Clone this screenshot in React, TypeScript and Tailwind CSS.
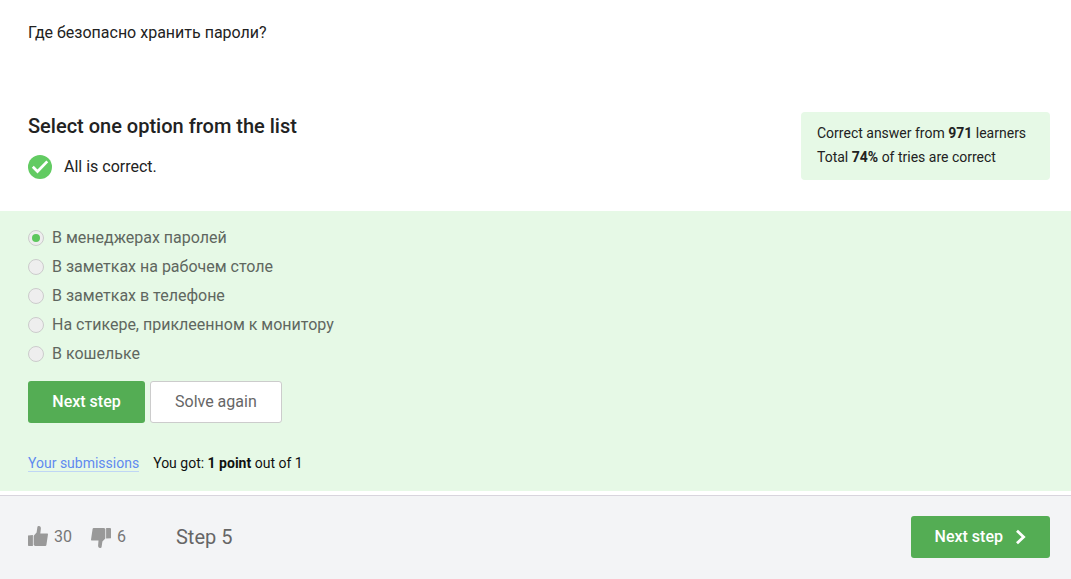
import { useState } from "react";

const options = [
  "В менеджерах паролей",
  "В заметках на рабочем столе",
  "В заметках в телефоне",
  "На стикере, приклеенном к монитору",
  "В кошельке",
];

function CheckBadge() {
  return (
    <svg className="size-6 shrink-0" viewBox="0 0 24 24" aria-hidden="true">
      <circle cx="12" cy="12" r="12" fill="#62cb62" />
      <path d="M4.8 11.8l4.7 4.7 9.8-10.1" fill="none" stroke="#fff" strokeWidth="2.7" />
    </svg>
  );
}

function ThumbUp() {
  return (
    <svg className="h-[22px] w-5" viewBox="0 0 20 22" fill="#999" aria-hidden="true">
      <path d="M0 9.5l4.9-.4V20H.6L0 19.5z" />
      <path d="M5.7 9.8L8.6 6.6 9.4 1C9.5.3 10.2 0 11 0c1.3 0 1.9 1 1.9 2.4l-.6 5.2h7.1c.4 0 .6.3.6.7L18.4 18.9c-.1.7-.5 1-1 1H7l-1.3-.8z" />
    </svg>
  );
}

function ThumbDown() {
  return (
    <svg className="h-[22px] w-5" viewBox="0 0 20 22" fill="#999" aria-hidden="true">
      <path d="M15.1 2h4.4l.5.5v9.8l-4.9.3z" />
      <path d="M14.3 12.4l-2.9 3.2-.8 5.3c-.1.7-.8 1.1-1.6 1.1-1.3 0-1.9-1-1.9-2.4l.4-5.1H.6c-.4 0-.6-.3-.6-.7L1.6 3c.1-.7.5-1 1-1H13l1.3.8z" />
    </svg>
  );
}

export default function App() {
  const [selected, setSelected] = useState(0);

  return (
    <div className="flex min-h-screen flex-col bg-white font-[Roboto,sans-serif] text-base text-[#222]">
      <main>
        <p className="px-7 pt-[21px] leading-6">Где безопасно хранить пароли?</p>

        <section className="mt-[67px] flex items-start justify-between pr-[21px] pl-7">
          <div>
            <h2 className="text-xl leading-7 font-medium">Select one option from the list</h2>
            <div className="mt-[15px] flex items-center gap-3">
              <CheckBadge />
              <span>All is correct.</span>
            </div>
          </div>
          <div className="min-w-[249px] rounded bg-[#e6f9e6] px-4 pt-[9px] pb-[11px] text-sm leading-6">
            <p>
              Correct answer from <b className="font-bold">971</b> learners
            </p>
            <p>
              Total <b className="font-bold">74%</b> of tries are correct
            </p>
          </div>
        </section>

        <section className="mt-[31px] bg-[#e6f9e6] px-7 pt-3 pb-4">
          <div role="radiogroup" aria-label="Select one option from the list">
            {options.map((option, index) => (
              <label key={option} className="flex h-[29px] items-center gap-2 text-[#5f675f]">
                <input
                  type="radio"
                  name="answer"
                  checked={selected === index}
                  onChange={() => setSelected(index)}
                  className="grid size-4 appearance-none place-items-center rounded-full border border-[#ccc] bg-[#eee] before:size-2 before:rounded-full before:content-[''] checked:before:bg-[#5dc75d]"
                />
                {option}
              </label>
            ))}
          </div>

          <div className="mt-[13px] flex gap-[5px]">
            <button className="h-[42px] min-w-[117px] rounded-[3px] bg-[#54ad54] px-6 font-medium text-white">
              Next step
            </button>
            <button className="h-[42px] rounded-[3px] border border-[#ccc] bg-white px-6 text-[#666]">
              Solve again
            </button>
          </div>

          <div className="mt-7 flex items-center gap-[14px] text-sm leading-6 text-[#111]">
            <a href="#submissions" className="border-b border-[#bfd6f5] leading-4 text-[#5f8af0]">
              Your submissions
            </a>
            <p>
              You got: <b className="font-bold">1 point</b> out of 1
            </p>
          </div>
        </section>
      </main>

      <footer className="mt-1 flex flex-1 items-start justify-between border-t border-[#d8d5dd] bg-[#f3f4f6] pt-5 pr-[21px] pl-7 text-[#777]">
        <div className="flex h-[42px] items-center">
          <button className="flex items-center gap-[6px]" aria-label="Like, 30">
            <ThumbUp />
            30
          </button>
          <button className="ml-[19px] flex items-center gap-[6px]" aria-label="Dislike, 6">
            <ThumbDown />
            6
          </button>
          <span className="ml-[50px] text-xl text-[#666]">Step 5</span>
        </div>
        <button className="flex h-[42px] items-center gap-3 rounded-[3px] bg-[#54ad54] px-6 font-medium text-white">
          Next step
          <svg className="h-4 w-[11px]" viewBox="0 0 11 16" aria-hidden="true">
            <path d="M2 1.8l6.6 6.2L2 14.2" fill="none" stroke="#fff" strokeWidth="2.8" />
          </svg>
        </button>
      </footer>
    </div>
  );
}
